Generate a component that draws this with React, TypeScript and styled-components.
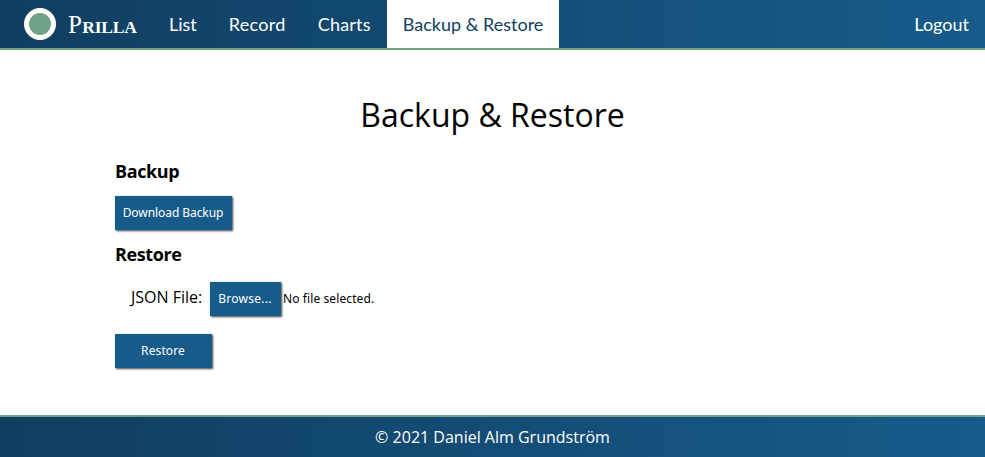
import React from "react";
import styled, { createGlobalStyle } from "styled-components";

const Global = createGlobalStyle`
  * { box-sizing: border-box; }
  body { margin: 0; background: #fff; color: #000; font: 16px "Open Sans", "Noto Sans", sans-serif; }
`;
const Page = styled.div`display: flex; flex-direction: column; height: 457px; overflow: hidden;`;
const Header = styled.header`
  display: flex; height: 50px; flex: none; color: #fff;
  background: linear-gradient(to right, #103e60, #175b8b);
  border-bottom: 2px solid #70a288;
  font: 18px/48px Lato, sans-serif;
`;
const Brand = styled.a`display: flex; align-items: center; width: 153px; padding-left: 24px;`;
const Logo = styled.svg`width: 32px; height: 32px; margin-right: 12px; flex: none;`;
const BrandName = styled.span`
  font: bold 17.5px/46px "Liberation Serif", serif; letter-spacing: -0.2px; text-transform: uppercase;
  padding-top: 2px; height: 48px;
  &::first-letter { font-size: 25px; font-weight: 400; letter-spacing: 0.3px; }
`;
const NavLink = styled.a<{ $active?: boolean; $tracking?: number }>`
  padding: 0 16px; white-space: nowrap;
  letter-spacing: ${(p) => p.$tracking ?? 0}px;
  color: ${(p) => (p.$active ? "#103e60" : "#fff")};
  background: ${(p) => (p.$active ? "#fff" : "transparent")};
`;
const Spacer = styled.div`flex: 1;`;
const Main = styled.main`flex: 1; padding: 43px 115px 0;`;
const Title = styled.h1`margin: 0; font-size: 32px; line-height: 44px; font-weight: 400; text-align: center;`;
const Heading = styled.h2`margin: 0; font: 700 18px/24px "Open Sans", sans-serif; letter-spacing: -0.4px;`;
const Section = styled.section<{ $top: number }>`margin-top: ${(p) => p.$top}px;`;
const Button = styled.button<{ $width: number; $tracking?: number }>`
  display: block; width: ${(p) => p.$width}px; height: 34px; border: 0;
  padding: 0 1px 2px 0;
  background: #175b8b; color: #fff; box-shadow: 1px 1px 2px rgba(0,0,0,.75);
  font: 12px "Noto Sans", sans-serif; letter-spacing: ${(p) => p.$tracking ?? 0}px; white-space: nowrap;
`;
const Actions = styled.div<{ $top: number }>`margin-top: ${(p) => p.$top}px;`;
const FileRow = styled.div`display: flex; align-items: center; margin-top: 16px; padding-left: 16px;`;
const Label = styled.label`width: 79px; font-size: 16px; line-height: 30px; padding-bottom: 4px;`;
const FileStatus = styled.span`margin-left: 2px; font: 12px/16px "Noto Sans", sans-serif; letter-spacing: 0.1px; padding-bottom: 1px;`;
const Footer = styled.footer`
  height: 42px; flex: none; border-top: 2px solid #70a288; color: #fff; text-align: center; line-height: 40px;
  background: linear-gradient(to right, #103e60, #175b8b);
`;

export default function App() {
  return (
    <Page>
      <Global />
      <Header>
        <Brand>
          <Logo viewBox="0 0 32 32"><circle cx="16" cy="16" r="13.5" fill="#70a288" stroke="#fff" strokeWidth="5" /></Logo>
          <BrandName>Prilla</BrandName>
        </Brand>
        <NavLink>List</NavLink>
        <NavLink $tracking={0.3}>Record</NavLink>
        <NavLink $tracking={0.2}>Charts</NavLink>
        <NavLink $active>Backup &amp; Restore</NavLink>
        <Spacer />
        <NavLink>Logout</NavLink>
      </Header>
      <Main>
        <Title>Backup &amp; Restore</Title>
        <Section $top={22}>
          <Heading>Backup</Heading>
          <Actions $top={13}><Button $width={117} $tracking={-0.07}>Download Backup</Button></Actions>
        </Section>
        <Section $top={12}>
          <Heading>Restore</Heading>
          <FileRow>
            <Label>JSON File:</Label>
            <Button $width={71} $tracking={0.25}>Browse...</Button>
            <FileStatus>No file selected.</FileStatus>
          </FileRow>
          <Actions $top={18}><Button $width={97} $tracking={0.1}>Restore</Button></Actions>
        </Section>
      </Main>
      <Footer>© 2021 Daniel Alm Grundström</Footer>
    </Page>
  );
}
